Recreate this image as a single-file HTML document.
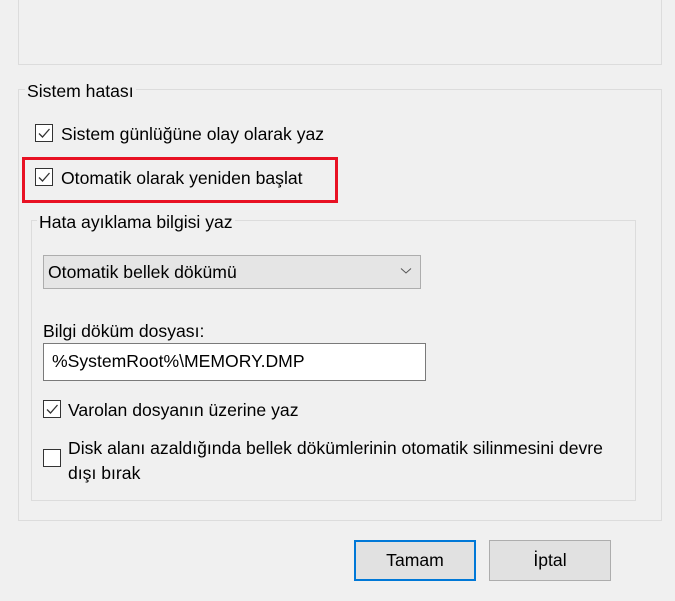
<!DOCTYPE html>
<html><head><meta charset="utf-8"><style>
body{margin:0;width:675px;height:601px;background:#f0f0f0;font-family:"Liberation Sans",sans-serif;font-size:17.6px;color:#000;position:relative;overflow:hidden}
.a{position:absolute}
.box{position:absolute;border:1px solid #dcdcdc}
.lbl{position:absolute;background:#f0f0f0;padding:0 2px;white-space:nowrap}
.cb{position:absolute;width:16px;height:16px;border:1px solid #333;background:#fff}
.cb svg{position:absolute;left:1px;top:1px}
.t{position:absolute;white-space:nowrap}
</style></head><body>
<div class="box" style="left:18px;top:-2px;width:642px;height:65px"></div>
<div class="box" style="left:18px;top:89px;width:642px;height:430px"></div>
<div class="lbl" style="left:25px;top:81px">Sistem hatası</div>
<div class="cb" style="left:35px;top:124px"><svg width="14" height="14"><path d="M2 7.5 L5.5 11 L12.5 3" stroke="#333" stroke-width="1.3" fill="none"/></svg></div>
<div class="t" style="left:61px;top:124px">Sistem günlüğüne olay olarak yaz</div>
<div class="a" style="left:22px;top:157px;width:310px;height:40px;border:3px solid #e81123"></div>
<div class="cb" style="left:35px;top:168px"><svg width="14" height="14"><path d="M2 7.5 L5.5 11 L12.5 3" stroke="#333" stroke-width="1.3" fill="none"/></svg></div>
<div class="t" style="left:61px;top:168px">Otomatik olarak yeniden başlat</div>
<div class="box" style="left:31px;top:220px;width:603px;height:279px"></div>
<div class="lbl" style="left:37px;top:212px">Hata ayıklama bilgisi yaz</div>
<div class="a" style="left:43px;top:255px;width:376px;height:32px;background:#e5e5e5;border:1px solid #adadad"></div>
<div class="t" style="left:48px;top:262px">Otomatik bellek dökümü</div>
<svg class="a" style="left:400px;top:267px" width="12" height="8"><path d="M1 1.5 L6 6 L11 1.5" stroke="#555" stroke-width="1" fill="none"/></svg>
<div class="t" style="left:43px;top:321px">Bilgi döküm dosyası:</div>
<div class="a" style="left:43px;top:343px;width:381px;height:36px;background:#fff;border:1px solid #7a7a7a"></div>
<div class="t" style="left:52px;top:351px">%SystemRoot%\MEMORY.DMP</div>
<div class="cb" style="left:43px;top:400px"><svg width="14" height="14"><path d="M2 7.5 L5.5 11 L12.5 3" stroke="#333" stroke-width="1.3" fill="none"/></svg></div>
<div class="t" style="left:68px;top:400px">Varolan dosyanın üzerine yaz</div>
<div class="cb" style="left:43px;top:449px"></div>
<div class="t" style="left:68px;top:436px;line-height:25px">Disk alanı azaldığında bellek dökümlerinin otomatik silinmesini devre<br>dışı bırak</div>
<div class="a" style="left:354px;top:540px;width:118px;height:37px;background:#e1e1e1;border:2px solid #0078d7;text-align:center;line-height:37px">Tamam</div>
<div class="a" style="left:489px;top:540px;width:120px;height:39px;background:#e1e1e1;border:1px solid #adadad;text-align:center;line-height:39px">İptal</div>
</body></html>
